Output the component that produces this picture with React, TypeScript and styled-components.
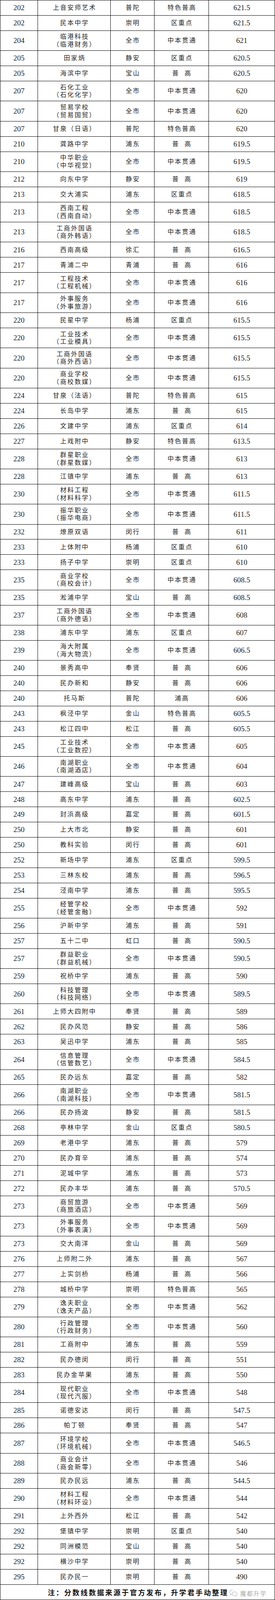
import React from 'react';
import styled, { createGlobalStyle } from 'styled-components';

// the photographed window stops at 4096px, so the 5263px sheet is fitted into it
const FIT = 4095 / 5262;
const SHORT = 50 * FIT;
const TALL = 66 * FIT;

const GlobalStyle = createGlobalStyle`
  html, body {
    margin: 0;
    padding: 0;
    background: #fff;
  }
  body {
    font-family: "Liberation Serif", "Noto Sans CJK SC", serif;
    color: #1f1f1f;
  }
`;

// rank, name (second line after |), district, type, score
type Entry = [string, string, string, string, string];

const rows: Entry[] = [
  ['202', '上音安师艺术', '普陀', '特色普高', '621.5'],
  ['202', '民本中学', '崇明', '区重点', '621.5'],
  ['204', '临港科技|临港财务', '全市', '中本贯通', '621'],
  ['205', '田家炳', '静安', '区重点', '620.5'],
  ['205', '海滨中学', '宝山', '普  高', '620.5'],
  ['207', '石化工业|石化化学', '全市', '中本贯通', '620'],
  ['207', '贸易学校|贸易国贸', '全市', '中本贯通', '620'],
  ['207', '甘泉（日语）', '普陀', '特色普高', '620'],
  ['210', '龚路中学', '浦东', '普  高', '619.5'],
  ['210', '中华职业|中华视觉', '全市', '中本贯通', '619.5'],
  ['212', '向东中学', '静安', '普  高', '619'],
  ['213', '交大浦实', '浦东', '区重点', '618.5'],
  ['213', '西南工程|西南自动', '全市', '中本贯通', '618.5'],
  ['213', '工商外国语|商外韩语', '全市', '中本贯通', '618.5'],
  ['216', '西南高级', '徐汇', '普  高', '616.5'],
  ['217', '青浦二中', '青浦', '普  高', '616'],
  ['217', '工程技术|工程机械', '全市', '中本贯通', '616'],
  ['217', '外事服务|外事旅游', '全市', '中本贯通', '616'],
  ['220', '民星中学', '杨浦', '区重点', '615.5'],
  ['220', '工业技术|工业模具', '全市', '中本贯通', '615.5'],
  ['220', '工商外国语|商外西语', '全市', '中本贯通', '615.5'],
  ['220', '商业学校|商校数媒', '全市', '中本贯通', '615.5'],
  ['224', '甘泉（法语）', '普陀', '特色普高', '615'],
  ['224', '长岛中学', '浦东', '普  高', '615'],
  ['226', '文建中学', '浦东', '区重点', '614'],
  ['227', '上戏附中', '静安', '特色普高', '613.5'],
  ['228', '群星职业|群星数媒', '全市', '中本贯通', '613'],
  ['228', '江镇中学', '浦东', '普  高', '613'],
  ['230', '材料工程|材料科学', '全市', '中本贯通', '611.5'],
  ['230', '振华职业|振华电商', '全市', '中本贯通', '611.5'],
  ['232', '燎原双语', '闵行', '普  高', '611'],
  ['233', '上体附中', '杨浦', '区重点', '610'],
  ['233', '扬子中学', '崇明', '区重点', '610'],
  ['235', '商业学校|商校会计', '全市', '中本贯通', '608.5'],
  ['235', '淞浦中学', '宝山', '普  高', '608.5'],
  ['237', '工商外国语|商外德语', '全市', '中本贯通', '608'],
  ['238', '浦东中学', '浦东', '区重点', '607'],
  ['239', '海大附属|海大物流', '全市', '中本贯通', '606.5'],
  ['240', '景秀高中', '奉贤', '普  高', '606'],
  ['240', '民办新和', '静安', '普  高', '606'],
  ['240', '托马斯', '普陀', '浦高', '606'],
  ['243', '枫泾中学', '金山', '特色普高', '605.5'],
  ['243', '松江四中', '松江', '普  高', '605.5'],
  ['245', '工业技术|工业数控', '全市', '中本贯通', '605'],
  ['246', '南湖职业|南湖酒店', '全市', '中本贯通', '604'],
  ['247', '建峰高级', '宝山', '普  高', '603'],
  ['248', '高东中学', '浦东', '普  高', '602.5'],
  ['249', '封浜高级', '嘉定', '普  高', '601.5'],
  ['250', '上大市北', '静安', '普  高', '601'],
  ['250', '教科实验', '闵行', '普  高', '601'],
  ['252', '新场中学', '浦东', '区重点', '599.5'],
  ['253', '三林东校', '浦东', '普  高', '596.5'],
  ['254', '泾南中学', '浦东', '普  高', '595.5'],
  ['255', '经管学校|经管金融', '全市', '中本贯通', '592'],
  ['256', '沪新中学', '浦东', '普  高', '591'],
  ['257', '五十二中', '虹口', '普  高', '590.5'],
  ['257', '群益职业|群益机械', '全市', '中本贯通', '590.5'],
  ['259', '祝桥中学', '浦东', '普  高', '590'],
  ['260', '科技管理|科技网络', '全市', '中本贯通', '589.5'],
  ['261', '上师大四附中', '奉贤', '普  高', '589'],
  ['262', '民办风范', '静安', '普  高', '586'],
  ['263', '吴迅中学', '浦东', '普  高', '585'],
  ['264', '信息管理|信管数艺', '全市', '中本贯通', '584.5'],
  ['265', '民办远东', '嘉定', '普  高', '582'],
  ['266', '南湖职业|南湖科技', '全市', '中本贯通', '581.5'],
  ['266', '民办扬波', '静安', '普  高', '581.5'],
  ['268', '亭林中学', '金山', '区重点', '580.5'],
  ['269', '老港中学', '浦东', '普  高', '579'],
  ['270', '民办育辛', '浦东', '普  高', '574'],
  ['271', '泥城中学', '浦东', '普  高', '573'],
  ['272', '民办丰华', '浦东', '普  高', '570.5'],
  ['273', '商贸旅游|商旅酒店', '全市', '中本贯通', '569'],
  ['273', '外事服务|外事表演', '全市', '中本贯通', '569'],
  ['273', '交大南洋', '金山', '普  高', '569'],
  ['276', '上师附二外', '浦东', '普  高', '567'],
  ['277', '上实剑桥', '杨浦', '普  高', '566'],
  ['278', '城桥中学', '崇明', '特色普高', '565'],
  ['279', '逸夫职业|逸夫产品', '全市', '中本贯通', '562'],
  ['280', '行政管理|行政财务', '全市', '中本贯通', '560'],
  ['281', '工商附中', '浦东', '普  高', '559'],
  ['282', '民办德闵', '闵行', '普  高', '551'],
  ['283', '民办金苹果', '浦东', '普  高', '550'],
  ['284', '现代职业|现代汽服', '全市', '中本贯通', '548'],
  ['285', '诺德安达', '闵行', '普  高', '547.5'],
  ['286', '帕丁顿', '奉贤', '普  高', '547'],
  ['287', '环境学校|环境机械', '全市', '中本贯通', '546.5'],
  ['288', '商业会计|商会新零', '全市', '中本贯通', '546'],
  ['289', '民办民远', '浦东', '普  高', '544.5'],
  ['290', '材料工程|材料环设', '全市', '中本贯通', '544'],
  ['291', '上外西外', '松江', '普  高', '542'],
  ['292', '堡镇中学', '崇明', '区重点', '540'],
  ['292', '同洲模范', '宝山', '普  高', '540'],
  ['292', '横沙中学', '崇明', '普  高', '540'],
  ['295', '民办民一', '崇明', '普  高', '490'],
];

const Sheet = styled.div`
  width: 703px;
  box-sizing: border-box;
  border-top: 1px solid #000;
  border-left: 1px solid #000;
`;

const Row = styled.div<{ $tall: boolean }>`
  display: grid;
  grid-template-columns: 96px 186px 112px 139px 169px;
  height: ${(p) => (p.$tall ? TALL : SHORT)}px;
  box-sizing: border-box;
  border-bottom: 1px solid #000;
`;

const Cell = styled.div<{ $cjk?: boolean }>`
  display: flex;
  flex-direction: column;
  align-items: center;
  justify-content: center;
  border-right: 1px solid #000;
  font-size: ${(p) => (p.$cjk ? 16 : 19)}px;
  letter-spacing: ${(p) => (p.$cjk ? 2.5 : 0)}px;
  padding-left: ${(p) => (p.$cjk ? 2.5 : 0)}px;
  line-height: 19.5px;
  white-space: pre;
`;

const NoteRow = styled.div`
  position: relative;
  height: ${SHORT}px;
  box-sizing: border-box;
  display: flex;
  align-items: center;
  justify-content: center;
  padding-left: 3px;
  border-right: 1px solid #000;
  border-bottom: 1px solid #000;
  font-family: "Noto Sans CJK SC", sans-serif;
  font-size: 18px;
  font-weight: 700;
  letter-spacing: 3px;
  color: #111;
`;

const Watermark = styled.div`
  position: absolute;
  right: 20px;
  top: 50%;
  transform: translateY(-40%);
  display: flex;
  align-items: center;
  gap: 3px;
  font-family: "Noto Sans CJK SC", sans-serif;
  font-size: 15px;
  font-weight: 400;
  letter-spacing: 2px;
  color: #a8a8a8;
`;

const WechatMark = () => (
  <svg width="28" height="20" viewBox="0 0 28 24" fill="none" stroke="#b5b5b5" strokeWidth="1.3">
    <path d="M11 3C5.8 3 2 6.2 2 10.2c0 2.3 1.2 4.2 3.2 5.5L4.4 18.6l3.3-1.7c1 .3 2.1.5 3.3.5" />
    <path d="M17.5 9c-4.3 0-7.6 2.7-7.6 6.1s3.3 6.1 7.6 6.1c.9 0 1.8-.1 2.6-.4l2.8 1.4-.7-2.4c1.8-1.1 2.9-2.8 2.9-4.7 0-3.4-3.3-6.1-7.6-6.1z" />
    <circle cx="8" cy="8.5" r="0.9" fill="#b5b5b5" stroke="none" />
    <circle cx="14" cy="8.5" r="0.9" fill="#b5b5b5" stroke="none" />
    <circle cx="15" cy="14" r="0.8" fill="#b5b5b5" stroke="none" />
    <circle cx="20" cy="14" r="0.8" fill="#b5b5b5" stroke="none" />
  </svg>
);

export default function App() {
  return (
    <>
      <GlobalStyle />
      <Sheet>
        {rows.map(([rank, name, district, kind, score], i) => {
          const [main, sub] = name.split('|');
          return (
            <Row key={i} $tall={!!sub}>
              <Cell>{rank}</Cell>
              <Cell $cjk>
                <span>{main}</span>
                {sub && <span>（{sub}）</span>}
              </Cell>
              <Cell $cjk>{district}</Cell>
              <Cell $cjk>{kind}</Cell>
              <Cell>{score}</Cell>
            </Row>
          );
        })}
        <NoteRow>
          注：分数线数据来源于官方发布，升学君手动整理
          <Watermark>
            <WechatMark />
            魔都升学
          </Watermark>
        </NoteRow>
      </Sheet>
    </>
  );
}
